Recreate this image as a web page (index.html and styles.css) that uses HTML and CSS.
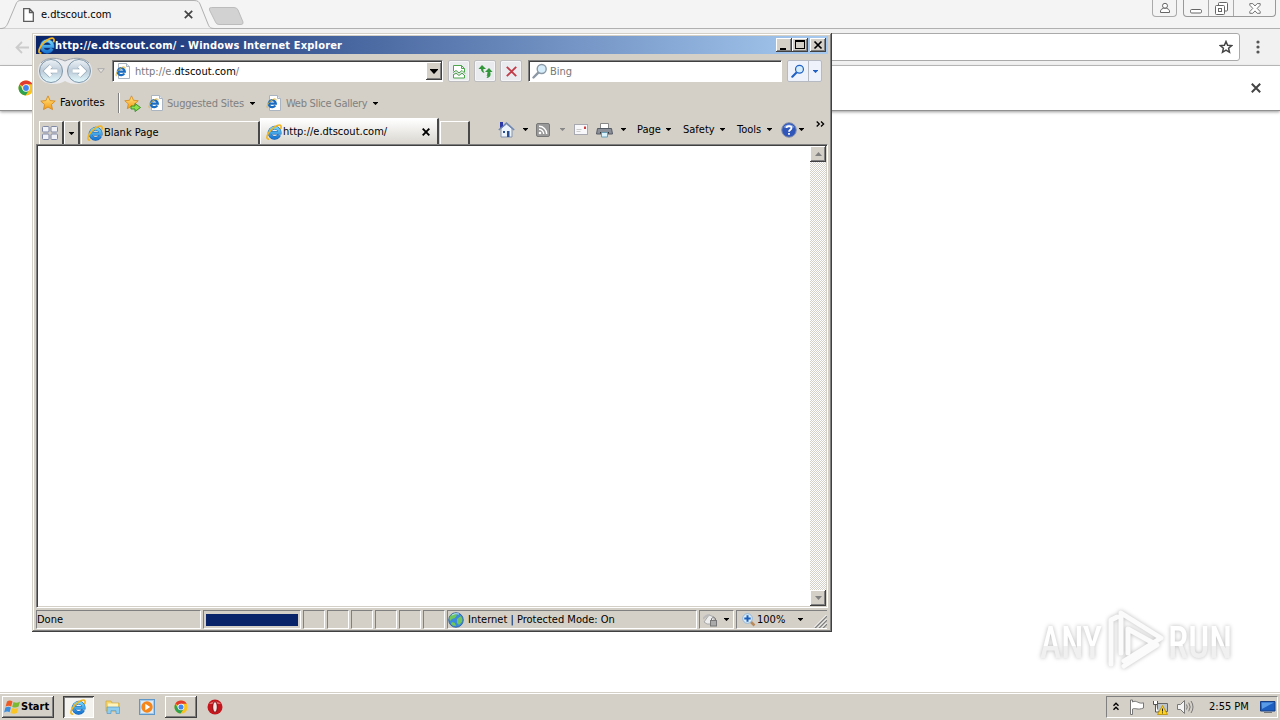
FILE: index.html
```html
<!DOCTYPE html>
<html lang="en">
<head>
  <meta charset="UTF-8" />
  <title>e.dtscout.com</title>
  <link rel="stylesheet" href="styles.css">
</head>
<body>
  <svg class="defs" width="0" height="0">
    <defs>
      <linearGradient id="ie-blue" x1="0" y1="0" x2="0" y2="1">
        <stop offset="0" stop-color="#6fd4fb"/><stop offset="1" stop-color="#1a78d2"/>
      </linearGradient>
      <linearGradient id="gold" x1="0" y1="0" x2="0" y2="1">
        <stop offset="0" stop-color="#ffe98a"/><stop offset="1" stop-color="#f59a12"/>
      </linearGradient>
      <linearGradient id="orb" x1="0" y1="0" x2="0" y2="1">
        <stop offset="0" stop-color="#eef3f7"/><stop offset=".5" stop-color="#bccbd8"/><stop offset="1" stop-color="#e4fbff"/>
      </linearGradient>
      <linearGradient id="wm" x1="0" y1="0" x2="0" y2="1">
        <stop offset=".55" stop-color="#fff"/><stop offset=".56" stop-color="#f0f0f0"/>
      </linearGradient>
      <symbol id="ie" viewBox="0 0 16 16">
        <path d="M13.200 11A5.100 5.100 0 1 1 13.700 8.800H5" fill="none" stroke="#1a5fae" stroke-width="3.600"/>
        <path d="M13.200 11A5.100 5.100 0 1 1 13.700 8.800H5" fill="none" stroke="url(#ie-blue)" stroke-width="2.700"/>
        <path d="M3.200 15C.4 15.700.2 12.800 2.500 9 5.500 4 12 .2 14.300 1.300 15.500 2 15.200 3.600 14.500 5" fill="none" stroke="#f3b51e" stroke-width="1.600"/>
      </symbol>
      <symbol id="ie-doc" viewBox="0 0 16 16">
        <path d="M3.500 .5h8l3 3v12h-11z" fill="#fff" stroke="#a9b4c0"/>
        <path d="M11.500 .5v3h3" fill="#e5ebf1" stroke="#a9b4c0"/>
        <path d="M9.300 10.500A3.500 3.500 0 1 1 9.800 8.700H3" fill="none" stroke="#1a6cc0" stroke-width="2.300"/>
        <path d="M1.600 13C-.3 12 3 6 7.500 4.200c2-.8 3 .2 2.500 1.400" fill="none" stroke="#e8b428" stroke-width="1"/>
      </symbol>
      <symbol id="star" viewBox="0 0 16 16">
        <path d="M8 .9l2.100 4.700 5.100.5-3.800 3.400 1.100 5.100L8 12l-4.500 2.600 1.100-5.100L.8 6.100l5.100-.5z" fill="url(#gold)" stroke="#d78a1c" stroke-width=".9"/>
      </symbol>
      <symbol id="chrome" viewBox="0 0 16 16">
        <circle cx="8" cy="8" r="7.500" fill="#fcc31e"/>
        <path d="M8 8L1.500 4.250A7.500 7.500 0 0 1 14.500 4.250H8z" fill="#e33b2e"/>
        <path d="M1.500 4.250A7.500 7.500 0 0 0 7.500 15.500L11.200 9.900 8 8 4.800 9.900z" fill="#2ea24f"/>
        <circle cx="8" cy="8" r="3.700" fill="#fff"/><circle cx="8" cy="8" r="2.900" fill="#4285ee"/>
      </symbol>
      <symbol id="down" viewBox="0 0 5 3" overflow="visible"><path d="M-.4 0h5.800L2.500 3.100z" fill="currentColor"/></symbol>
      <symbol id="lens" viewBox="0 0 16 16">
        <path d="M6.300 9.700L1.500 14.500" stroke="currentColor" stroke-width="2.400" stroke-linecap="round"/>
        <circle cx="9.700" cy="6" r="4.500" fill="#d6eefb" stroke="currentColor" stroke-width="1.400"/>
      </symbol>
    </defs>
  </svg>

  <div class="desktop">
    <!-- Chrome, behind -->
    <div class="chrome">
      <div class="tabstrip">
        <div class="ctab">
          <svg class="ctab-shape" width="246" height="29" viewBox="0 0 246 29">
            <path d="M0 28.500C5 28.500 6 27 8 23L16 4C17 1.500 18 .5 21 .5H194C198 .5 199 2 200 4L208 24C209.500 27.500 210 28.500 215 28.500" fill="#f2f2f2" stroke="#b0b0b0"/>
            <path d="M211.500 7.500H234Q237 7.500 238 10L243 22Q243.500 24.500 241 24.500H219Q216.500 24.500 215.500 22L209.500 10Q208.500 7.500 211.500 7.500Z" fill="#d2d2d2" stroke="#bcbcbc"/>
          </svg>
          <svg class="page-icon" width="11" height="14" viewBox="0 0 11 14">
            <path d="M.7.7h5.800l3.800 3.800v8.800H.7zM6.500.7v3.800h3.800" fill="#fff" stroke="#5c5c5c" stroke-width="1.300"/>
          </svg>
          <span class="ctab-title">e.dtscout.com</span>
          <svg class="ctab-close" width="9" height="9" viewBox="0 0 9 9"><path d="M.8.8l7.400 7.400M8.200.8L.8 8.200" stroke="#444" stroke-width="1.700"/></svg>
        </div>
        <div class="cuser">
          <svg width="12" height="12" viewBox="0 0 12 12" fill="#fff" stroke="#666"><circle cx="6" cy="3.800" r="2.500"/><path d="M1.500 10.500V8.800Q2 7 4.300 6.300H7.700Q10 7 10.500 8.800v1.700z"/></svg>
        </div>
        <div class="cbuttons">
          <span><svg width="12" height="5" viewBox="0 0 12 5"><rect x=".5" y=".5" width="11" height="3.500" rx="1.200" fill="#fff" stroke="#666"/></svg></span>
          <span><svg width="13" height="13" viewBox="0 0 13 13" fill="#fff" stroke="#666"><rect x="3.500" y=".5" width="9" height="8.500" rx="1"/><rect x=".5" y="3.500" width="9" height="9" rx="1"/><rect x="3.500" y="6.500" width="3" height="3"/></svg></span>
          <span><svg width="12" height="11" viewBox="0 0 12 11"><path d="M.8.600h3L6 3 8.200.600h3v1.600L8.200 5.400l3 3.200v1.700h-3L6 7.900 3.800 10.300h-3V8.600l3-3.200-3-3.200z" fill="#fff" stroke="#666" stroke-width=".9"/></svg></span>
        </div>
      </div>
      <div class="ctoolbar">
        <svg width="14" height="13" viewBox="0 0 14 13"><path d="M14 6.500H1.800M7 1L1.500 6.500 7 12" fill="none" stroke="#ccc" stroke-width="1.800"/></svg>
        <div class="omnibox">
          <svg width="14" height="14" viewBox="0 0 14 14"><path d="M7 1.500l1.600 3.700 4.100.4-3.100 2.700.9 4L7 10.200l-3.500 2.100.9-4L1.300 5.600l4.100-.4z" fill="none" stroke="#444" stroke-width="1.500"/></svg>
        </div>
        <svg class="dots" width="4" height="14" viewBox="0 0 4 14" fill="#555"><circle cx="2" cy="2" r="1.600"/><circle cx="2" cy="7" r="1.600"/><circle cx="2" cy="12" r="1.600"/></svg>
      </div>
      <div class="infobar">
        <svg width="16" height="16"><use href="#chrome"/></svg>
        <svg width="10" height="10" viewBox="0 0 10 10"><path d="M.8.8l8.400 8.400M9.200.8L.8 9.200" stroke="#444" stroke-width="2"/></svg>
      </div>
      <div class="cpage"></div>
    </div>

    <div class="taskbar">
      <div class="start">
        <svg width="17" height="16" viewBox="0 0 17 16">
          <path d="M3 2.500C5 1 7 1.500 8.500 2.500L7.200 7.500C5.500 6.500 3.500 6.500 1.600 7.600z" fill="#ee5a24"/>
          <path d="M9.500 3C11.500 4 13.500 4 16 2.500L14.600 7.600C12.500 9 10 8.800 8.200 7.900z" fill="#7cb932"/>
          <path d="M1.400 8.600C3.500 7.500 5.500 7.500 6.900 8.500L5.600 13.300C4 12.300 2 12.400.1 13.500z" fill="#3a8ee0"/>
          <path d="M7.900 9C10 10 12 10 14.300 8.700L13 13.800C11 15 8.500 14.900 6.600 13.900z" fill="#fbc523"/>
        </svg>
        <span>Start</span>
      </div>
      <div class="task pressed"><svg width="16" height="16"><use href="#ie"/></svg></div>
      <div class="task">
        <svg width="16" height="16" viewBox="0 0 16 16"><path d="M1 2h5l1 2h7v8H1z" fill="#f4d56c" stroke="#cfa63a" stroke-width=".7"/><path d="M3 4.500h10V8H3z" fill="#fff3bd"/><path d="M2 8h12.500v6.500H11v-2.800H6v2.800H2z" fill="#8fcdee" stroke="#5799c5" stroke-width=".7"/></svg>
      </div>
      <div class="task">
        <svg width="16" height="16" viewBox="0 0 16 16"><rect x=".5" y=".5" width="15" height="15" fill="#a7cbe8" stroke="#5f98c8"/><path d="M2 2h12v12H2z" fill="#dbeaf6"/><circle cx="8" cy="8" r="5.700" fill="#f4861c"/><path d="M6.300 4.800v6.400L11.200 8z" fill="#fff"/></svg>
      </div>
      <div class="task raised"><svg width="14" height="14"><use href="#chrome"/></svg></div>
      <div class="task">
        <svg width="16" height="16" viewBox="0 0 16 16"><circle cx="8" cy="8" r="7.500" fill="#c5161d"/><path d="M2 5a7 5 0 0 1 12 0" fill="#e6696c"/><ellipse cx="8" cy="8" rx="2.300" ry="5.400" fill="#f6e7e7" stroke="#800b10"/></svg>
      </div>
      <div class="tray">
        <svg class="chev" width="6" height="9" viewBox="0 0 6 9"><path d="M.5 3.700L3 1.200l2.500 2.500M.5 7.700L3 5.200l2.500 2.500" fill="none" stroke="#000" stroke-width="1.400"/></svg>
        <svg class="flag" width="16" height="16" viewBox="0 0 16 16"><path d="M1.500 1v14.500h2V10c3-1.500 5 1.500 11-1V3.800C9.500 5.500 7.500.5 3.500 3V1z" fill="#fff" stroke="#777"/></svg>
        <svg class="net" width="17" height="16" viewBox="0 0 17 16"><path d="M5.500 4.500h10v8h-10z" fill="#bcc4cc" stroke="#666"/><path d="M1.500 2v3.500h4V2M3.500 5.500V13h3" fill="#fff" stroke="#555"/><path d="M10.500 6.500l5 9h-10z" fill="#ffd21c" stroke="#b98c00" stroke-width=".8"/><path d="M10.500 9.500v3M10.500 13.400v1" stroke="#222"/></svg>
        <svg class="vol" width="18" height="16" viewBox="0 0 18 16"><path d="M1.500 5.500h3l4-4v13l-4-4h-3z" fill="#f4f4f4" stroke="#777"/><path d="M10.500 5.500q1.500 2.500 0 5M12.700 3.700q3 4.300 0 8.600M15 2q4 6 0 12" fill="none" stroke="#777"/></svg>
        <span class="clock">2:55 PM</span>
        <svg width="16" height="14" viewBox="0 0 16 14"><path d="M.5 1.500h14.500v9.500H.5z" fill="#1d5fc0" stroke="#173e82"/><path d="M1.500 2.500h12.500L2 9z" fill="#5a9be8"/><path d="M4 12.500h8" stroke="#777"/></svg>
      </div>
    </div>

    <svg class="watermark" width="230" height="80" viewBox="0 0 230 80">
      <g class="wm-text">
        <text x="8" y="54" textLength="62" lengthAdjust="spacingAndGlyphs">ANY</text>
        <text x="136" y="54" textLength="64" lengthAdjust="spacingAndGlyphs">RUN</text>
      </g>
      <g class="wm-logo">
        <path d="M79 60V16l6-3M89 49V9l40 25-37 23"/>
        <path d="M96 49V25l27 15M125 41L92 62"/>
      </g>
    </svg>

    <!-- Internet Explorer, in front -->
    <div class="ie">
      <div class="titlebar">
        <svg width="17" height="17"><use href="#ie"/></svg>
        <span class="title">http://e.dtscout.com/ - Windows Internet Explorer</span>
        <div class="winbtn"><svg width="14" height="12"><path d="M3 9h6v2H3z"/></svg></div>
        <div class="winbtn"><svg width="14" height="12"><path d="M2 1h10v9H2zM3 3v6h8V3z" fill-rule="evenodd"/></svg></div>
        <div class="winbtn close"><svg width="14" height="12"><path d="M3.500 2.500l7 7M10.500 2.500l-7 7" stroke="#000" stroke-width="1.700"/></svg></div>
      </div>

      <div class="navrow">
        <svg class="orbs" width="56" height="30" viewBox="0 0 56 30">
          <path d="M1 15C1 0 20 0 28 5C36 0 55 0 55 15S36 30 28 25C20 30 1 30 1 15z" fill="#e9ebee"/>
          <path d="M4 7C10 0 22 2 28 5C34 2 46 0 52 7" fill="none" stroke="#999fa8"/>
          <circle cx="14" cy="15" r="11.500" fill="url(#orb)" stroke="#7f96a8"/>
          <circle cx="42" cy="15" r="11.500" fill="url(#orb)" stroke="#7f96a8"/>
          <path d="M20.500 15H9.500M14 10L9 15l5 5M35.500 15h11M42 10l5 5-5 5" fill="none" stroke="#93a6b5" stroke-width="4.600"/>
          <path d="M20.500 15H9.500M14 10L9 15l5 5M35.500 15h11M42 10l5 5-5 5" fill="none" stroke="#fff" stroke-width="3.400"/>
        </svg>
        <svg class="recent" width="8" height="6" viewBox="0 0 8 6"><path d="M.7.700h6.600L4 4.800z" fill="#e6e3df" stroke="#aaa"/></svg>
        <div class="address">
          <svg width="16" height="16"><use href="#ie-doc"/></svg>
          <span class="url">http://e.<b>dtscout.com</b>/</span>
          <div class="combo"><svg width="8" height="5"><use href="#down"/></svg></div>
        </div>
        <div class="navbtn"><svg width="14" height="15" viewBox="0 0 14 15"><path d="M1.500 7V1.500h8l3 3V8M1.500 11v3h11v-2.500M9.500 1.500v3h3" fill="#fff" stroke="#4ca64c"/><path d="M1 8.500l3-2 3 2.500 3-2.500 3 3M1 11l3-2 3 2.500 3-2.500 3 3" fill="none" stroke="#4a9e4a"/></svg></div>
        <div class="navbtn"><svg width="15" height="14" viewBox="0 0 15 14"><path d="M4 1L.5 5H3q0 3 3.500 4Q5 7 5.300 5H8z" fill="#31963a"/><path d="M11 13l3.500-4H12q0-3-3.500-4 1.500 2 1.200 4H7z" fill="#31963a" transform="matrix(1 0 0 -1 0 17)"/><path d="M9.500 8.500h3V11q-.5 2.500-4 3 1.200-1.500 1-3z" fill="#31963a"/></svg></div>
        <div class="navbtn"><svg width="11" height="11" viewBox="0 0 11 11"><path d="M.8.800l9.400 9.400M10.200.8L.8 10.200" stroke="#c23c48" stroke-width="1.900"/></svg></div>
        <div class="search"><svg width="16" height="16"><use href="#lens"/></svg><span>Bing</span></div>
        <div class="searchbtn">
          <span><svg width="14" height="14"><use href="#lens"/></svg></span>
          <span><svg width="5" height="3"><use href="#down"/></svg></span>
        </div>
      </div>

      <div class="favrow">
        <svg width="16" height="16"><use href="#star"/></svg>
        <span class="fav">Favorites</span>
        <i class="sep"></i>
        <svg width="17" height="17" viewBox="0 0 17 17"><use href="#star" width="15" height="15"/><path d="M7 11h4V8.500l5.500 4-5.500 4V14H7z" fill="#8be04c" stroke="#2e8b21" stroke-width=".9"/></svg>
        <svg class="link-icon" width="16" height="16"><use href="#ie-doc"/></svg>
        <span class="link suggested">Suggested Sites</span>
        <svg width="5" height="3"><use href="#down"/></svg>
        <svg class="link-icon gallery-icon" width="16" height="16"><use href="#ie-doc"/></svg>
        <span class="link gallery">Web Slice Gallery</span>
        <svg width="5" height="3"><use href="#down"/></svg>
      </div>

      <div class="tabrow">
        <div class="tab quick">
          <svg width="16" height="14" viewBox="0 0 16 14" fill="#f0f2f8" stroke="#7f88a4"><rect x=".5" y=".5" width="6.500" height="5.500" rx="1"/><rect x="9" y=".5" width="6.500" height="5.500" rx="1"/><rect x=".5" y="8" width="6.500" height="5.500" rx="1"/><rect x="9" y="8" width="6.500" height="5.500" rx="1"/></svg>
        </div>
        <div class="tab quickdrop"><svg width="5" height="3"><use href="#down"/></svg></div>
        <div class="tab blank"><svg width="16" height="16"><use href="#ie"/></svg><span>Blank Page</span></div>
        <div class="tab active"><svg width="16" height="16"><use href="#ie"/></svg><span>http://e.dtscout.com/</span>
          <svg class="tabclose" width="8" height="8" viewBox="0 0 8 8"><path d="M.7.7l6.600 6.600M7.300.7L.7 7.300" stroke="#000" stroke-width="1.900"/></svg>
        </div>
        <div class="tab new"></div>
        <div class="commands">
          <svg class="home" width="17" height="17" viewBox="0 0 17 17"><path d="M3 7.500L8.500 3l5.500 4.500V16H3z" fill="#edf4fb" stroke="#8294b0"/><path d="M.8 9L8.500 2l7.700 7" fill="none" stroke="#6f88b0" stroke-width="1.500"/><path d="M2 1h3v4L2 7z" fill="#2b38a8"/><path d="M9 10h2.500v6H9zM5 10h2v2H5z" fill="#284f94"/></svg>
          <svg class="a1" width="5" height="3"><use href="#down"/></svg>
          <svg class="rss" width="14" height="14" viewBox="0 0 14 14"><rect x=".5" y=".5" width="13" height="13" rx="1.500" fill="#999" stroke="#777"/><circle cx="4" cy="10" r="1.300" fill="#fff"/><path d="M3 6.300A4.700 4.700 0 0 1 7.700 11M3 3.300A7.700 7.700 0 0 1 10.700 11" fill="none" stroke="#fff" stroke-width="1.400"/></svg>
          <svg class="a2" width="5" height="3"><use href="#down"/></svg>
          <svg class="mail" width="14" height="11" viewBox="0 0 14 11"><rect x=".5" y=".5" width="13" height="10" fill="#f8f8fa" stroke="#a8a8b0"/><path d="M10 2.500h2V5h-2z" fill="#d03c3c"/><path d="M2.500 5.500h5M2.500 7.500h4" stroke="#ccc"/></svg>
          <svg class="print" width="17" height="16" viewBox="0 0 17 16"><path d="M4.500 1.500h8V7h-8z" fill="#fff" stroke="#888"/><path d="M1.500 6.500h14l1 5.500H.5z" fill="#8c9098" stroke="#555b65"/><path d="M4 10h9v1.500H4z" fill="#333"/><path d="M5.500 10.500h6v4.500h-6z" fill="#d9f2fb" stroke="#699db5"/></svg>
          <svg class="a3" width="5" height="3"><use href="#down"/></svg>
          <span class="page">Page</span><svg width="5" height="3"><use href="#down"/></svg>
          <span class="safety">Safety</span><svg width="5" height="3"><use href="#down"/></svg>
          <span class="tools">Tools</span><svg width="5" height="3"><use href="#down"/></svg>
          <svg class="help" width="16" height="16" viewBox="0 0 16 16"><circle cx="8" cy="8" r="7.300" fill="#2f56b8" stroke="#8792ac"/><path d="M2.500 5.500a6 5 0 0 1 11 0z" fill="#7fa0e6"/><path d="M5.500 6C5.500 3.500 10.500 3.300 10.500 6 10.500 7.800 8 7.800 8 9.800M8 11v1.800" fill="none" stroke="#fff" stroke-width="1.800"/></svg>
          <svg width="5" height="3"><use href="#down"/></svg>
          <svg class="more" width="9" height="6" viewBox="0 0 9 6"><path d="M.7.500l2.600 2.500L.7 5.500M5 .5l2.600 2.500L5 5.500" fill="none" stroke="#000" stroke-width="1.300"/></svg>
        </div>
      </div>

      <div class="view">
        <div class="document"></div>
        <div class="scrollbar">
          <div class="sbtn"><svg width="7" height="4" viewBox="0 0 7 4"><path d="M0 4h7L3.500 0z" fill="#808080"/></svg></div>
          <div class="sbtn"><svg width="7" height="4" viewBox="0 0 7 4"><path d="M0 0h7L3.500 4z" fill="#808080"/></svg></div>
        </div>
      </div>

      <div class="status">
        <div class="panel done"><span>Done</span></div>
        <div class="panel progress"><div></div></div>
        <div class="panel small"></div>
        <div class="panel small"></div>
        <div class="panel small"></div>
        <div class="panel small"></div>
        <div class="panel small"></div>
        <div class="panel small"></div>
        <div class="panel zone">
          <svg width="16" height="16" viewBox="0 0 16 16"><circle cx="8" cy="8" r="7.300" fill="#3a8add" stroke="#2a588f" stroke-width=".8"/><path d="M3 3q4-3 6 0L7 6l-3 1-2 2q-1.500-3 1-6zM9 7l4-3q2 3 1.200 5.500L11 13l-2-2zM4 10l3 1 1 3q-3 .5-5-2z" fill="#6fc65c"/><path d="M4 3a6 4 0 0 1 7-1" stroke="#b9e4ff" fill="none"/></svg>
          <span>Internet | Protected Mode: On</span>
        </div>
        <div class="panel lock">
          <svg width="16" height="16" viewBox="0 0 16 16"><path d="M1 10L6 3l5 2v7H4z" fill="#eee" stroke="#aaa"/><path d="M0 7q3-4 7-4" stroke="#bbb" fill="none" stroke-width="2"/><rect x="7.500" y="8.500" width="6" height="5.500" fill="#aaa" stroke="#777"/><path d="M8.500 8V6.500q2-2.500 4 0V8" fill="none" stroke="#777"/></svg>
          <svg width="5" height="3"><use href="#down"/></svg>
        </div>
        <div class="panel zoom">
          <svg width="14" height="14" viewBox="0 0 14 14"><path d="M8.500 8.500l4 4" stroke="#b98a5c" stroke-width="2.500"/><circle cx="5.500" cy="5.500" r="4.800" fill="#d9edfc" stroke="#92b6d6"/><path d="M5.500 2.300v6.400M2.300 5.500h6.400" stroke="#1c5fb8" stroke-width="2"/></svg>
          <span>100%</span>
          <svg width="5" height="3"><use href="#down"/></svg>
          <svg class="grip" width="13" height="13" viewBox="0 0 13 13"><path d="M1 13L13 1M5 13l8-8M9 13l4-4" stroke="#808080" stroke-width="1.500"/><path d="M0 12.500L12.500 0M4 12.500L12.500 4M8 12.500L12.500 8" stroke="#fff"/></svg>
        </div>
      </div>
    </div>
  </div>
</body>
</html>
```
FILE: styles.css
```css
* {
  box-sizing: border-box;
}
body {
  margin: 0;
  font-family: Tahoma, "DejaVu Sans Condensed", "DejaVu Sans", sans-serif;
  font-stretch: condensed;
  font-size: 11px;
  line-height: 14px;
  color: #000;
  overflow: hidden;
}
svg {
  display: block;
  flex: none;
}
span {
  white-space: nowrap;
}
.defs {
  position: absolute;
}
.desktop {
  position: relative;
  display: flex;
  flex-direction: column;
  width: 1280px;
  height: 720px;
  background: #fff;
}

/* chrome */
.chrome {
  flex: 1;
  display: flex;
  flex-direction: column;
}
.tabstrip {
  display: flex;
  height: 29px;
  background: #f4f4f4;
  border-bottom: 1px solid #b0b0b0;
}
.ctab {
  position: relative;
  display: flex;
  align-items: center;
  width: 246px;
  height: 29px;
  padding-left: 23px;
}
.ctab-shape {
  position: absolute;
  left: 0;
  top: 0;
}
.page-icon, .ctab-title, .ctab-close {
  position: relative;
}
.ctab-title {
  width: 143px;
  margin-left: 7px;
}
.cuser {
  display: flex;
  justify-content: center;
  width: 25px;
  height: 17px;
  margin-left: 906px;
  padding-top: 2px;
  border: 1px solid #aaa;
  border-top: 0;
  border-radius: 0 0 4px 4px;
}
.cbuttons {
  display: flex;
  height: 17px;
  margin-left: 6px;
  border: 1px solid #999;
  border-top: 0;
  border-radius: 0 0 4px 4px;
}
.cbuttons span {
  display: flex;
  align-items: center;
  justify-content: center;
  width: 25px;
}
.cbuttons span + span {
  border-left: 1px solid #aaa;
}
.cbuttons span:first-child {
  width: 24px;
  align-items: flex-end;
  padding-bottom: 2px;
}
.cbuttons span:last-child {
  width: 42px;
}
.ctoolbar {
  display: flex;
  align-items: center;
  height: 37px;
  padding-left: 15px;
  background: #f1f1f1;
  border-bottom: 1px solid #bbb;
}
.omnibox {
  display: flex;
  align-items: center;
  justify-content: flex-end;
  width: 1100px;
  height: 28px;
  margin-left: 111px;
  padding-right: 6px;
  background: #fff;
  border: 1px solid #aaa;
  border-radius: 3px;
}
.dots {
  margin-left: 16px;
}
.infobar {
  display: flex;
  align-items: center;
  justify-content: space-between;
  height: 45px;
  padding: 0 19px 0 18px;
  background: #fff;
  border-bottom: 1px solid #909090;
  box-shadow: 0 1px 3px #999;
}

/* internet explorer */
.ie {
  position: absolute;
  left: 32px;
  top: 33px;
  display: flex;
  flex-direction: column;
  width: 800px;
  height: 599px;
  padding: 3px 4px 2px;
  background: #d4d0c8;
  box-shadow: inset -1px -1px #404040, inset 1px 1px #d4d0c8, inset -2px -2px #808080, inset 2px 2px #fff;
}
.titlebar {
  display: flex;
  align-items: center;
  height: 18px;
  padding: 0 2px;
  background: linear-gradient(90deg, #0a246a, #a6caf0);
  color: #fff;
}
.title {
  flex: 1;
  padding-top: 1px;
  font-weight: bold;
  letter-spacing: .18px;
}
.winbtn {
  width: 16px;
  height: 14px;
  padding: 1px;
  background: #d4d0c8;
  box-shadow: inset -1px -1px #404040, inset 1px 1px #fff, inset -2px -2px #808080;
}
.winbtn.close {
  margin-left: 2px;
}
.navrow {
  display: flex;
  align-items: center;
  height: 34px;
  padding-left: 1px;
}
.recent {
  margin-left: 4px;
}
.address, .search {
  display: flex;
  align-items: center;
  height: 22px;
  background: #fff;
  border: 1px solid #808080;
  border-color: #808080 #fff #fff #808080;
  box-shadow: inset 1px 1px #404040;
}
.address {
  width: 331px;
  margin-left: 7px;
  padding-left: 2px;
}
.url {
  flex: 1;
  margin-left: 4px;
  padding-top: 2px;
  color: #777;
}
.url b {
  font-weight: normal;
  color: #000;
}
.combo {
  display: flex;
  align-items: center;
  justify-content: center;
  width: 16px;
  height: 18px;
  background: #d4d0c8;
  box-shadow: inset -1px -1px #404040, inset 1px 1px #fff, inset -2px -2px #808080;
}
.navbtn {
  display: flex;
  align-items: center;
  justify-content: center;
  width: 22px;
  height: 22px;
  margin-right: 4px;
  background: #e9ebef;
  border: 1px solid #bdbdbf;
  border-radius: 2px;
  box-shadow: inset 0 0 0 1px #f6f6f8;
}
.address + .navbtn {
  margin-left: 5px;
}
.search {
  width: 254px;
  margin-left: 2px;
  padding-left: 3px;
  color: #777;
}
.search svg {
  color: #8b98a5;
}
.search span {
  margin-left: 2px;
  padding-top: 2px;
}
.searchbtn {
  display: flex;
  width: 35px;
  height: 22px;
  margin-left: 5px;
  background: #edf2fb;
  border: 1px solid #b5bac3;
  border-radius: 2px;
  color: #2060c4;
}
.searchbtn span {
  display: flex;
  align-items: center;
  justify-content: center;
  width: 20px;
}
.searchbtn span + span {
  width: 13px;
  border-left: 1px solid #b5bac3;
}
.favrow {
  display: flex;
  align-items: center;
  height: 30px;
  padding-left: 4px;
}
.fav {
  width: 58px;
  margin-left: 4px;
}
.sep {
  width: 2px;
  height: 20px;
  margin-right: 4px;
  border-left: 1px solid #808080;
  border-right: 1px solid #fff;
}
.link-icon {
  margin-left: 7px;
}
.link {
  padding-top: 1px;
  color: #808080;
}
.suggested {
  width: 79px;
  margin-left: 3px;
  margin-right: 4px;
  letter-spacing: -.2px;
}
.gallery-icon {
  margin-left: 11px;
}
.gallery {
  width: 83px;
  margin-left: 4px;
  margin-right: 4px;
  letter-spacing: -.3px;
}
.tabrow {
  display: flex;
  align-items: flex-end;
  height: 26px;
  padding-left: 3px;
}
.tab {
  display: flex;
  align-items: center;
  height: 23px;
  border: 1px solid #fff;
  border-right: 2px solid #484848;
  border-bottom: 0;
}
.quick {
  width: 25px;
  padding-left: 2px;
}
.quickdrop {
  width: 16px;
  padding-left: 4px;
}
.blank {
  width: 179px;
  margin-left: 1px;
  padding-left: 5px;
}
.tab span {
  margin-left: 1px;
}
.active {
  width: 179px;
  height: 26px;
  padding-left: 5px;
  background: linear-gradient(#fff, #d9d6cf);
}
.active span {
  flex: 1;
}
.tabclose {
  margin-right: 7px;
}
.new {
  width: 30px;
  margin-left: 1px;
}
.commands {
  display: flex;
  align-items: center;
  height: 27px;
  padding-bottom: 2px;
  margin-left: 28px;
}
.a1, .a2, .a3 {
  margin-left: 8px;
}
.a2 {
  color: #888;
}
.rss {
  margin-left: 8px;
}
.a2 {
  margin-left: 10px;
}
.mail {
  margin-left: 9px;
}
.print {
  margin-left: 8px;
}
.page {
  width: 25px;
  margin: 0 4px 0 11px;
}
.safety {
  width: 33px;
  margin: 0 4px 0 12px;
}
.tools {
  width: 27px;
  margin: 0 3px 0 12px;
}
.help {
  margin-left: 9px;
  margin-right: 2px;
}
.more {
  margin: 0 0 11px 12px;
}
.view {
  flex: 1;
  display: flex;
  border: 1px solid #808080;
  border-color: #808080 #fff #fff #808080;
  box-shadow: inset 1px 1px #404040, inset -1px -1px #d4d0c8;
  padding: 1px;
}
.document {
  flex: 1;
  background: #fff;
}
.scrollbar {
  display: flex;
  flex-direction: column;
  justify-content: space-between;
  width: 16px;
  background: repeating-conic-gradient(#d4d0c8 0 25%, #fff 0 50%) 0 0 / 2px 2px;
}
.sbtn {
  display: flex;
  align-items: center;
  justify-content: center;
  height: 16px;
  background: #d4d0c8;
  box-shadow: inset -1px -1px #404040, inset 1px 1px #fff, inset -2px -2px #808080;
}
.status {
  display: flex;
  align-items: flex-start;
  height: 22px;
  padding-top: 2px;
}
.panel {
  display: flex;
  align-items: center;
  height: 19px;
  border: 1px solid #808080;
  border-color: #808080 #fff #fff #808080;
}
.done {
  width: 165px;
  margin-right: 2px;
}
.progress {
  width: 98px;
  margin-right: 2px;
  padding: 2px;
}
.progress div {
  width: 92px;
  height: 12px;
  background: #0a246a;
}
.small {
  width: 22px;
  margin-right: 2px;
}
.zone {
  width: 250px;
  margin-right: 2px;
}
.zone span {
  margin-left: 4px;
}
.lock {
  width: 35px;
  gap: 5px;
  margin-right: 2px;
  padding-left: 3px;
}
.zoom {
  width: 91px;
  padding-left: 5px;
  border-right: 0;
}
.zoom span {
  width: 43px;
  margin-left: 1px;
}
.grip {
  align-self: flex-end;
  margin-left: 11px;
}

/* watermark */
.watermark {
  position: absolute;
  left: 1032px;
  top: 604px;
  filter: drop-shadow(0 0 2px #bbb);
}
.wm-text {
  font-family: Roboto, sans-serif;
  font-size: 44px;
  font-weight: 500;
  fill: url(#wm);
}
.wm-logo {
  fill: none;
  stroke: #fbfbfb;
  stroke-width: 5;
  stroke-linejoin: round;
  stroke-linecap: round;
}

/* taskbar */
.taskbar {
  display: flex;
  align-items: center;
  height: 28px;
  padding: 1px 2px;
  background: #d4d0c8;
  border-top: 1px solid #d4d0c8;
  box-shadow: inset 0 1px #fff;
}
.start {
  display: flex;
  align-items: center;
  width: 52px;
  height: 22px;
  margin-right: 9px;
  padding-left: 2px;
  font-weight: bold;
  box-shadow: inset -1px -1px #404040, inset 1px 1px #fff, inset -2px -2px #808080;
}
.task {
  display: flex;
  align-items: center;
  justify-content: center;
  width: 32px;
  height: 22px;
  margin-right: 2px;
}
.pressed {
  width: 31px;
  padding-right: 2px;
  background: #f4f3f0;
  box-shadow: inset 1px 1px #404040, inset -1px -1px #fff, inset 2px 2px #808080;
  margin-right: 3px;
}
.raised {
  box-shadow: inset -1px -1px #404040, inset 1px 1px #fff, inset -2px -2px #808080;
}
.tray {
  display: flex;
  align-items: center;
  width: 172px;
  height: 22px;
  margin-left: auto;
  padding-left: 6px;
  border: 1px solid #808080;
  border-color: #808080 #fff #fff #808080;
}
.flag {
  margin-left: 10px;
}
.net {
  margin-left: 7px;
}
.vol {
  margin-left: 7px;
}
.clock {
  width: 41px;
  margin: 0 10px 0 15px;
}
```
